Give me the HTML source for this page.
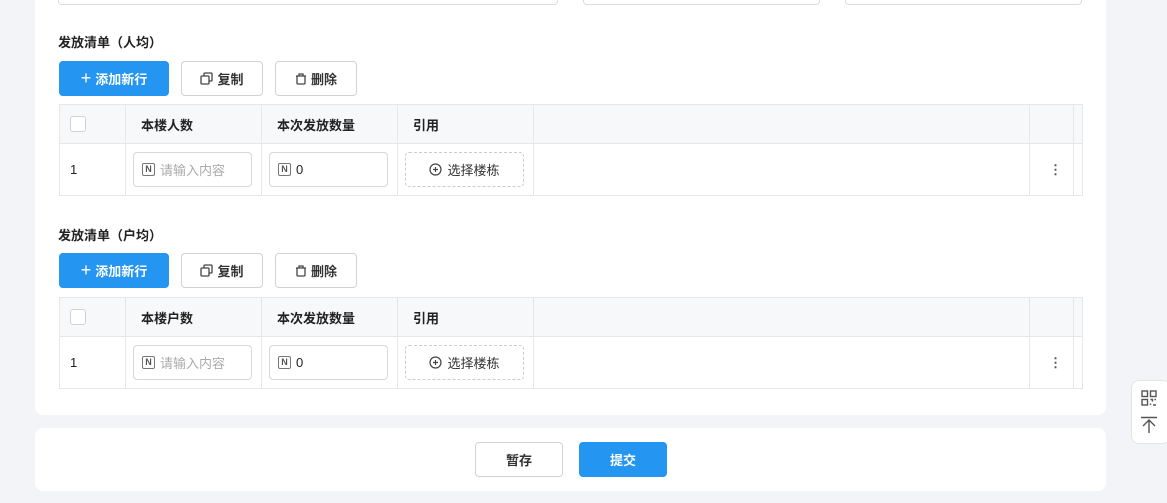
<!DOCTYPE html>
<html><head><meta charset="utf-8"><style>
*{box-sizing:border-box;margin:0;padding:0}
body{width:1167px;height:503px;overflow:hidden;background:#f3f4f7;font-family:"Liberation Sans","Noto Sans CJK SC",sans-serif;font-size:13px;color:#222;position:relative}
.card{position:absolute;left:35px;width:1071px;background:#fff;border-radius:8px}
.abs{position:absolute}
.inp{position:absolute;top:-30px;height:35px;border:1px solid #d9dce1;border-radius:4px;background:#fff}
.title{position:absolute;left:58px;font-weight:bold;font-size:13px;color:#222}
.btn{position:absolute;height:35px;border:1px solid #cfd3d9;border-radius:4px;background:#fff;display:flex;align-items:center;justify-content:center;font-weight:bold;color:#333;gap:4px}
.btn.p{background:#2495f0;border-color:#2495f0;color:#fff}
table{position:absolute;left:59px;width:1024px;border-collapse:collapse;border:1px solid #e5e7eb;table-layout:fixed}
td,th{border:1px solid #e5e7eb;text-align:left;font-weight:bold;padding:0 0 0 15px}
th{height:39px;background:#f7f8fa}
td{height:52px;font-weight:normal;background:#fff}
.cb{width:16px;height:16px;border:1px solid #cfd3d9;border-radius:3px;background:#fff;margin-left:-4px}
.ni{width:119px;height:35px;border:1px solid #d5d8dd;border-radius:4px;display:flex;align-items:center;padding-left:8px;gap:5px;margin-left:-8px}
.nb{width:13px;height:13px;border:1.5px solid #777;border-radius:2px;font-size:9px;line-height:10px;text-align:center;color:#555;font-weight:bold}
.sel{width:119px;height:35px;border:1px dashed #c9ccd2;border-radius:4px;display:flex;align-items:center;justify-content:center;gap:5px;margin-left:-8px;color:#333}
</style></head><body>
<div class="card" style="top:-20px;height:435px"></div>
<div class="inp" style="left:58px;width:500px"></div>
<div class="inp" style="left:583px;width:237px"></div>
<div class="inp" style="left:845px;width:237px"></div>

<div class="title" style="top:32px">发放清单（人均）</div>
<div class="btn p" style="left:59px;top:61px;width:110px"><span style="font-size:18px;font-weight:normal">+</span>添加新行</div>
<div class="btn" style="left:181px;top:61px;width:82px"><svg width="13" height="13" viewBox="0 0 13 13" fill="none" stroke="#444" stroke-width="1.3"><rect x="1" y="4" width="8" height="8" rx="1"/><path d="M4 4V2a1 1 0 0 1 1-1h6a1 1 0 0 1 1 1v6a1 1 0 0 1-1 1H9"/></svg>复制</div>
<div class="btn" style="left:275px;top:61px;width:82px"><svg width="12" height="13" viewBox="0 0 12 13" fill="none" stroke="#444" stroke-width="1.3"><path d="M2 4v7a1 1 0 0 0 1 1h6a1 1 0 0 0 1-1V4M1 4h10M4 4V2h4v2"/></svg>删除</div>
<table style="top:104px">
<colgroup><col style="width:66px"><col style="width:136px"><col style="width:136px"><col style="width:136px"><col><col style="width:44px"><col style="width:9px"></colgroup>
<tr><th style="padding-left:14px"><div class="cb"></div></th><th>本楼人数</th><th>本次发放数量</th><th>引用</th><th></th><th></th><th></th></tr>
<tr><td style="padding-left:10px">1</td><td><div class="ni"><span class="nb">N</span><span style="color:#aaa">请输入内容</span></div></td><td><div class="ni"><span class="nb">N</span>0</div></td><td><div class="sel"><svg width="13" height="13" viewBox="0 0 13 13" fill="none" stroke="#444" stroke-width="1.2"><circle cx="6.5" cy="6.5" r="5.5"/><path d="M6.5 4v5M4 6.5h5"/></svg>选择楼栋</div></td><td></td><td style="padding-left:19px;font-weight:bold;color:#555">⋮</td><td></td></tr>
</table>

<div class="title" style="top:225px">发放清单（户均）</div>
<div class="btn p" style="left:59px;top:253px;width:110px"><span style="font-size:18px;font-weight:normal">+</span>添加新行</div>
<div class="btn" style="left:181px;top:253px;width:82px"><svg width="13" height="13" viewBox="0 0 13 13" fill="none" stroke="#444" stroke-width="1.3"><rect x="1" y="4" width="8" height="8" rx="1"/><path d="M4 4V2a1 1 0 0 1 1-1h6a1 1 0 0 1 1 1v6a1 1 0 0 1-1 1H9"/></svg>复制</div>
<div class="btn" style="left:275px;top:253px;width:82px"><svg width="12" height="13" viewBox="0 0 12 13" fill="none" stroke="#444" stroke-width="1.3"><path d="M2 4v7a1 1 0 0 0 1 1h6a1 1 0 0 0 1-1V4M1 4h10M4 4V2h4v2"/></svg>删除</div>
<table style="top:297px">
<colgroup><col style="width:66px"><col style="width:136px"><col style="width:136px"><col style="width:136px"><col><col style="width:44px"><col style="width:9px"></colgroup>
<tr><th style="padding-left:14px"><div class="cb"></div></th><th>本楼户数</th><th>本次发放数量</th><th>引用</th><th></th><th></th><th></th></tr>
<tr><td style="padding-left:10px">1</td><td><div class="ni"><span class="nb">N</span><span style="color:#aaa">请输入内容</span></div></td><td><div class="ni"><span class="nb">N</span>0</div></td><td><div class="sel"><svg width="13" height="13" viewBox="0 0 13 13" fill="none" stroke="#444" stroke-width="1.2"><circle cx="6.5" cy="6.5" r="5.5"/><path d="M6.5 4v5M4 6.5h5"/></svg>选择楼栋</div></td><td></td><td style="padding-left:19px;font-weight:bold;color:#555">⋮</td><td></td></tr>
</table>

<div class="card" style="top:428px;height:63px"></div>
<div class="btn" style="left:475px;top:442px;width:88px">暂存</div>
<div class="btn p" style="left:579px;top:442px;width:88px">提交</div>

<div class="abs" style="left:1131px;top:380px;width:40px;height:64px;background:#fff;border:1px solid #e3e5e9;border-radius:8px"></div>
<svg class="abs" style="left:1141px;top:390px" width="16" height="16" viewBox="0 0 16 16" fill="none" stroke="#555" stroke-width="1.4"><rect x="1" y="1" width="5.5" height="5.5"/><rect x="9.5" y="1" width="5.5" height="5.5"/><rect x="1" y="9.5" width="5.5" height="5.5"/><path d="M9.5 9.5h2v2M13.5 9.5h1.5M9.5 13.5v1.5M12 15h3"/></svg>
<svg class="abs" style="left:1140px;top:416px" width="18" height="18" viewBox="0 0 18 18" fill="none" stroke="#555" stroke-width="1.4"><path d="M1 1.5h16M9 4v13M3 10l6-6 6 6"/></svg>
</body></html>
